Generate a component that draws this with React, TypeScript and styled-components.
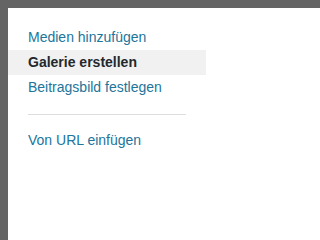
import React from "react";
import styled, { createGlobalStyle } from "styled-components";

const Global = createGlobalStyle`
  html, body {
    margin: 0;
    padding: 0;
    background: #646464;
  }
`;

const Backdrop = styled.div`
  min-height: 100vh;
  padding: 8px 0 0 8px;
  box-sizing: border-box;
  background: #646464;
  display: flex;
`;

const Panel = styled.div`
  flex: 1;
  min-height: calc(100vh - 8px);
  background: #ffffff;
`;

const Menu = styled.nav`
  width: 198px;
  padding-top: 17px;
  display: flex;
  flex-direction: column;
  font-family: "Liberation Sans", Arial, sans-serif;
  font-size: 14px;
`;

const Item = styled.a<{ $active?: boolean }>`
  display: block;
  padding: 4px 20px;
  line-height: 17px;
  color: ${(p) => (p.$active ? "#23282d" : "#21759b")};
  font-weight: ${(p) => (p.$active ? 700 : 400)};
  background: ${(p) => (p.$active ? "#f1f1f1" : "transparent")};
  text-decoration: none;
  white-space: nowrap;
`;

const Separator = styled.div`
  height: 0;
  border-top: 1px solid #dddddd;
  margin: 14px 20px 13px;
`;

export default function App() {
  return (
    <>
      <Global />
      <Backdrop>
        <Panel>
          <Menu>
            <Item href="#">Medien hinzufügen</Item>
            <Item href="#" $active>
              Galerie erstellen
            </Item>
            <Item href="#">Beitragsbild festlegen</Item>
            <Separator />
            <Item href="#">Von URL einfügen</Item>
          </Menu>
        </Panel>
      </Backdrop>
    </>
  );
}
